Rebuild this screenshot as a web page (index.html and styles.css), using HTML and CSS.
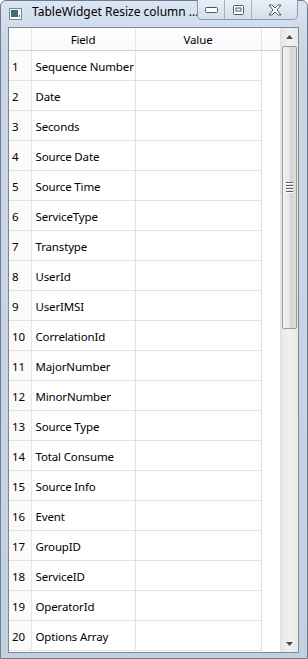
FILE: index.html
```html
<!DOCTYPE html>
<html lang="en">
<head>
  <meta charset="UTF-8" />
  <title>TableWidget Resize column</title>
  <link rel="stylesheet" href="styles.css">
</head>
<body>
  <div class="window">
    <div class="titlebar">
      <div class="app-icon">
        <svg width="13" height="12" viewBox="0 0 13 12">
          <rect x="0.5" y="0.5" width="12" height="11" fill="#f4f6f8" stroke="#7d8792"/>
          <rect x="2" y="2" width="7" height="7" fill="#3f6d6a"/>
          <rect x="10" y="7" width="1" height="2" fill="#3f6d6a"/>
        </svg>
      </div>
      <div class="title">TableWidget Resize column ...</div>
      <div class="caption-buttons">
        <div class="cbtn min">
          <svg width="13" height="6" viewBox="0 0 13 6"><rect x="0.5" y="0.5" width="12" height="5" rx="1" fill="#fff" stroke="#4c5866"/></svg>
        </div>
        <div class="cbtn max">
          <svg width="11" height="10" viewBox="0 0 11 10"><rect x="0.5" y="0.5" width="10" height="9" rx="1" fill="#fff" stroke="#4c5866"/><rect x="3" y="3" width="5" height="3" fill="none" stroke="#4c5866"/></svg>
        </div>
        <div class="cbtn close">
          <svg width="16" height="12" viewBox="0 0 16 12"><path d="M2 1 H5 L8 4 L11 1 H14 L10 6 L14 11 H11 L8 8 L5 11 H2 L6 6 Z" fill="#fff" stroke="#4c5866" stroke-linejoin="round"/></svg>
        </div>
      </div>
    </div>
    <div class="client">
      <div class="widget">
        <div class="grid-area">
          <table class="grid">
            <thead>
              <tr>
                <th class="corner"></th>
                <th class="col-field">Field</th>
                <th class="col-value">Value</th>
                <th class="col-rest"></th>
              </tr>
            </thead>
            <tbody id="rows"></tbody>
          </table>
        </div>
        <div class="scrollbar">
          <div class="arrow up">
            <svg width="7" height="4" viewBox="0 0 7 4"><path d="M0 4 L3.5 0 L7 4 Z" fill="#4d4d4d"/></svg>
          </div>
          <div class="track">
            <div class="thumb">
              <div class="grip"><span></span><span></span><span></span><span></span></div>
            </div>
          </div>
          <div class="arrow down">
            <svg width="7" height="4" viewBox="0 0 7 4"><path d="M0 0 L7 0 L3.5 4 Z" fill="#4d4d4d"/></svg>
          </div>
        </div>
      </div>
    </div>
  </div>

  <script>
    const fields = ["Sequence Number", "Date", "Seconds", "Source Date", "Source Time",
      "ServiceType", "Transtype", "UserId", "UserIMSI", "CorrelationId",
      "MajorNumber", "MinorNumber", "Source Type", "Total Consume", "Source Info",
      "Event", "GroupID", "ServiceID", "OperatorId", "Options Array"];
    const tbody = document.getElementById("rows");

    fields.forEach((name, i) => {
      const tr = document.createElement("tr");
      tr.innerHTML = `<td class="num">${i + 1}</td><td class="field">${name}</td><td class="value"></td><td class="rest"></td>`;
      tbody.appendChild(tr);
    });
  </script>
</body>
</html>
```

FILE: styles.css
```css
html, body {
  margin: 0;
  padding: 0;
}
body {
  width: 308px;
  height: 659px;
  overflow: hidden;
  font-family: "Noto Sans", "Open Sans", sans-serif;
  font-size: 12px;
  color: #000;
}
.window {
  width: 308px;
  height: 659px;
  box-sizing: border-box;
  background: linear-gradient(180deg, #dbe6f3 0%, #c9d7e7 40px, #c2d1e2 100%);
  border: 1px solid #6f7d8c;
  border-radius: 6px 6px 0 0;
  padding: 0 8px 5px 7px;
  display: flex;
  flex-direction: column;
}
.titlebar {
  height: 26px;
  flex: none;
  display: flex;
  align-items: flex-start;
  position: relative;
}
.app-icon {
  margin-top: 6px;
  margin-left: 1px;
  width: 13px;
  height: 12px;
}
.title {
  margin-left: 10px;
  margin-top: 2px;
  font-size: 12px;
  line-height: 18px;
  white-space: nowrap;
}
.caption-buttons {
  position: absolute;
  right: 1px;
  top: -1px;
  display: flex;
  height: 19px;
  border: 1px solid #8d9aab;
  border-top: none;
  border-radius: 0 0 5px 5px;
  background: linear-gradient(180deg, #e9eff6, #d4dfeb);
  overflow: hidden;
}
.cbtn {
  display: flex;
  align-items: center;
  justify-content: center;
  border-left: 1px solid #a3b0c0;
}
.cbtn.min {
  width: 26px;
  border-left: none;
}
.cbtn.max {
  width: 26px;
}
.cbtn.close {
  width: 45px;
}
.client {
  flex: 1;
  display: flex;
}
.widget {
  flex: 1;
  display: flex;
  background: #fff;
  border: 1px solid #828790;
  overflow: hidden;
}
.grid-area {
  flex: 1;
  overflow: hidden;
}
.grid {
  border-collapse: collapse;
  table-layout: fixed;
  width: 272px;
  font-size: 11.5px;
  letter-spacing: -0.15px;
}
.grid th {
  height: 22px;
  padding: 2px 0 0;
  box-sizing: border-box;
  font-weight: normal;
  text-align: center;
  background: linear-gradient(180deg, #ffffff, #f7f8fa);
  border-right: 1px solid #e3e4e6;
  border-bottom: 1px solid #d5d5d5;
}
.corner {
  width: 22px;
}
.col-field {
  width: 104px;
}
.col-value {
  width: 126px;
}
.grid th.col-rest {
  border-right: none;
}
.grid td {
  height: 30px;
  box-sizing: border-box;
  padding: 2px 0 0;
  border-bottom: 1px solid #e2e2e2;
  border-right: 1px solid #e2e2e2;
  white-space: nowrap;
  overflow: hidden;
}
.grid td.num {
  padding-left: 3px;
  background: #fbfbfb;
  border-right-color: #e6e6e6;
}
.grid td.field {
  padding-left: 4px;
}
.grid td.rest {
  border: none;
}
.scrollbar {
  width: 17px;
  display: flex;
  flex-direction: column;
  background: linear-gradient(90deg, #e6e6e6, #f2f2f2 50%, #e9e9e9);
  border-left: 1px solid #e0e0e0;
}
.arrow {
  height: 17px;
  display: flex;
  align-items: center;
  justify-content: center;
}
.track {
  flex: 1;
  padding: 1px 0;
}
.thumb {
  height: 283px;
  box-sizing: border-box;
  margin: 0 0 0 1px;
  width: 15px;
  border: 1px solid #9a9a9a;
  border-radius: 2px;
  background: linear-gradient(90deg, #f2f2f2, #e6e6e6 50%, #d2d2d2 51%, #dedede);
  display: flex;
  align-items: center;
  justify-content: center;
}
.grip {
  display: flex;
  flex-direction: column;
  gap: 1px;
}
.grip span {
  display: block;
  width: 7px;
  height: 1px;
  background: #5f5f5f;
  border-bottom: 1px solid #fff;
}
```
